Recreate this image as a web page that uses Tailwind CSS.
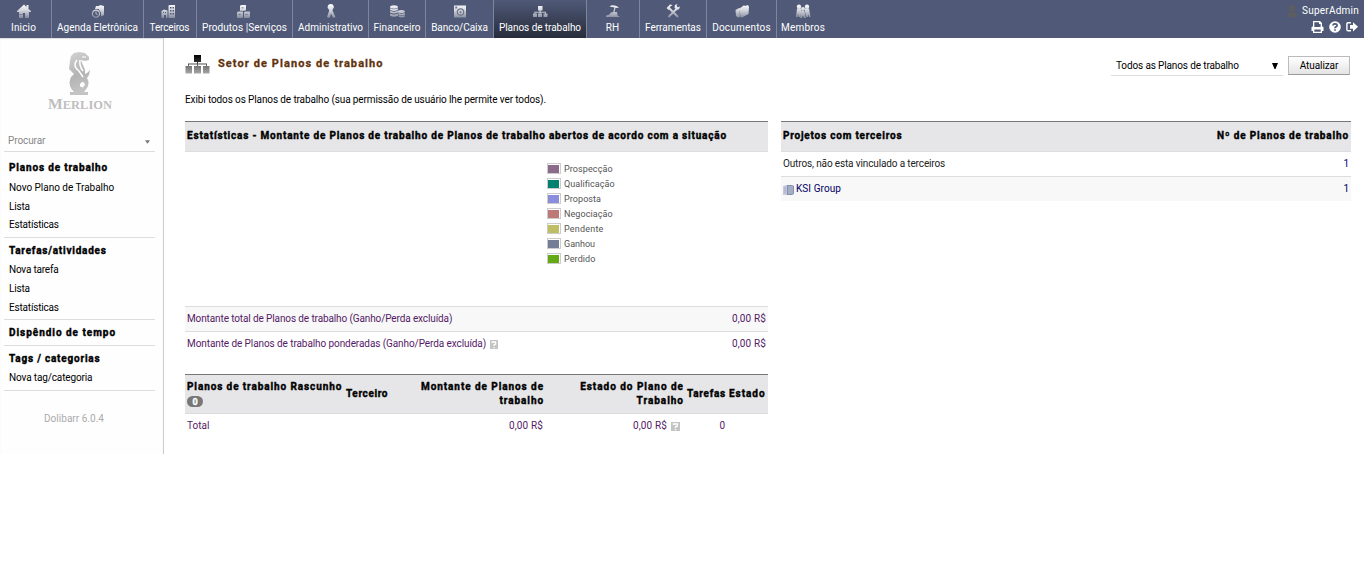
<!DOCTYPE html>
<html lang="pt-BR">
<head>
<meta charset="utf-8">
<title>Planos de trabalho</title>
<script src="https://cdn.jsdelivr.net/npm/@tailwindcss/browser@4"></script>
</head>
<body class="h-[580px] overflow-hidden bg-white font-[Roboto,sans-serif] text-[10px] leading-[14px] text-black">
<svg class="absolute h-0 w-0" aria-hidden="true"><defs>
<linearGradient id="g" gradientUnits="userSpaceOnUse" x1="0" y1="1" x2="0" y2="15"><stop offset="0" stop-color="#fff"/><stop offset=".45" stop-color="#d4d6dc"/><stop offset="1" stop-color="#858b9d"/></linearGradient>
<linearGradient id="k" gradientUnits="userSpaceOnUse" x1="0" y1="0" x2="0" y2="19"><stop offset="0" stop-color="#000"/><stop offset=".35" stop-color="#2c2c2c"/><stop offset=".6" stop-color="#777"/><stop offset="1" stop-color="#aaa"/></linearGradient>
<linearGradient id="m" x1="0" y1="0" x2=".2" y2="1"><stop offset="0" stop-color="#d2d2d2"/><stop offset=".6" stop-color="#b4b4b4"/><stop offset="1" stop-color="#c4c4c4"/></linearGradient>
</defs></svg>

<header class="flex h-[38px] justify-between bg-[#505a78] text-white">
<nav class="flex whitespace-nowrap [&>a]:flex [&>a]:h-full [&>a]:flex-col [&>a]:items-center [&>a]:border-r [&>a]:border-[#7d869d] [&>a]:pt-[3px] [&>a>svg]:size-4 [&>a>span]:mt-[2px]">
<a class="w-[52px] pr-1"><svg viewBox="0 0 16 16" fill="url(#g)"><path d="M1 8 8 1.500 10.500 4V2h2v4L15 8v1h-2v6H9v-5H7v1H3V9H1zM3 11.500h4V15H3z"/></svg><span class="tracking-[0.159px]">Inicio</span></a>
<a class="w-[92px]"><svg viewBox="0 0 16 16" fill="url(#g)"><path d="M6 3h3l1-1 4 1v9l-3 1.500V9.500L8.500 6H5z"/><path fill-rule="evenodd" d="M6 6.500a4.200 4.200 0 1 0 .1 0zm0 1.200a3 3 0 1 1-.1 0zM5.500 8.500h1v2l1.500 1-.6.800-1.900-1.300z"/></svg><span class="tracking-[0.009px]">Agenda Eletrônica</span></a>
<a class="w-[53px] pr-px"><svg viewBox="0 0 16 16" fill="url(#g)" class="-ml-1"><path fill-rule="evenodd" d="M8.500 2.500 10 2h5v13H8.500zM10 4v1.500h1.500V4zm2.500 0v1.500H14V4zM10 7v1.500h1.500V7zm2.500 0v1.500H14V7zM10 10v1.500h1.500V10zm2.500 0v1.500H14V10z"/><path fill-rule="evenodd" d="M1.500 8 4 6.500l3.500 1V15H6v-3H4v3H1.500zm1.500 1v1h1V9zm2 0v1h1V9z"/></svg><span class="tracking-[-0.16px]">Terceiros</span></a>
<a class="w-[96px]"><svg viewBox="0 0 16 16" fill="url(#g)" class="-ml-1"><path fill-rule="evenodd" d="M5 3l1-1h5v5l-1 .7H5zM6.500 4.500v.8h2v-.8zM2 9.500l1-1h5v5.500l-.500 1H2zM3.500 11v.8h2V11zM9 9.500l1-1h5v5.500l-1 1H9zm1.500 1.500v.8h2V11z"/></svg><span class="tracking-[0.082px]">Produtos |Serviços</span></a>
<a class="w-[76px]"><svg viewBox="0 0 16 16" fill="url(#g)"><path d="M8 1a3 3 0 0 1 1.800 5.300L9.500 7.500 12.500 14l-1.500 1-1.500-1L8 10.500 7 14.200 5.500 15 4 14l2.200-6.500-.5-1.200A3 3 0 0 1 8 1z"/></svg><span class="tracking-[0.031px]">Administrativo</span></a>
<a class="w-[57px]"><svg viewBox="0 0 16 16" fill="url(#g)"><ellipse cx="5" cy="4" rx="3.900" ry="1.700"/><path d="M1.100 5.200q3.900 2 7.800 0v1.800q-3.900 2-7.800 0zM1.100 7.800q3.900 2 7.800 0v1.800q-3.900 2-7.800 0zM1.100 10.400q3.900 2 7.800 0v2.400q-3.900 2-7.800 0z"/><ellipse cx="12.200" cy="8.500" rx="3.600" ry="1.500"/><path d="M9.500 10q3 1.500 6.300 0v1.700q-3 1.500-6.300 0zM9.500 12.200q3 1.500 6.300 0v1.500q-3 1.500-6.300 0z"/></svg><span class="tracking-[0.059px]">Financeiro</span></a>
<a class="w-[68px]"><svg viewBox="0 0 16 16"><path fill="url(#g)" d="M2 2.500h12v12H2z"/><circle cx="8.500" cy="9" r="3.200" fill="none" stroke="#6d748a" stroke-width="1.200"/><circle cx="8.500" cy="9" r="1" fill="#6d748a"/><path fill="#737a90" d="M3.200 3.500h2v2h-2z"/></svg><span class="tracking-[-0.03px]">Banco/Caixa</span></a>
<a class="w-[93px] bg-linear-to-b from-[#505a78] to-[#282d3c]"><svg viewBox="0 0 16 16" fill="url(#g)"><path d="M6 3h4.500v4.500H8.700v1.200h5.200V10.500H15.500V14h-4v-3.500h1.500v-.8H8.700v.8H10V14H6v-3.500h1.500v-.8H3.300v.8H5V14H1v-3.500h1.300V8.700h5.200V7.500H6z"/></svg><span class="tracking-[-0.06px]">Planos de trabalho</span></a>
<a class="w-[53px] pr-px"><svg viewBox="0 0 16 16" fill="url(#g)"><path d="M4.500 3.500Q7 1.500 9 2.500q3-.5 5 2.500l-3.500-.3L9.500 9H12l.5 3.500L15 14H1v-1.200l4-1.600.5-1.500L8.200 9l1.300-4.500z"/></svg><span class="tracking-[0.2px]">RH</span></a>
<a class="w-[67px]"><svg viewBox="0 0 16 16"><path fill="none" stroke="url(#g)" stroke-width="2" d="m4 5 9 9M12 5.500 3.500 14"/><path fill="url(#g)" d="M1.500 5 5 1.500 7.500 2 4.800 4 5 6 3.500 7zM9.500 4.500 10 2l2.500-1L11.500 3l1.300 1.300L15 3.500 14 6.200l-2.500.8z"/></svg><span class="tracking-[-0.04px]">Ferramentas</span></a>
<a class="w-[70px]"><svg viewBox="0 0 16 16" fill="url(#g)"><path d="m1.500 7 4-2.200.5 9.200-2 .5L2 13zM5.500 5.500 9 3l1-.8 1 .8L14 2l1 2-.5 7L8 14.500 6.500 14z"/></svg><span class="tracking-[0.2px]">Documentos</span></a>
<a class="w-[53px] border-r-transparent!"><svg viewBox="0 0 16 16" fill="url(#g)"><circle cx="4" cy="3.700" r="2.200"/><circle cx="12" cy="3.700" r="2.200"/><circle cx="8" cy="6" r="2"/><path d="M2 5.500h4l.5 3L5 14H3.500L3 10l-.5 4H1zM10 5.500h4l1.500 8.500H14l-.5-3-.5 3h-1.500l-1.500-5zM6.500 8h3l1.500 7H9l-1-2.500L7 15H5z"/></svg><span class="tracking-[0.203px]">Membros</span></a>
</nav>
<div class="flex flex-col items-end pr-[6px] pt-1">
<div class="flex items-center gap-[5px]"><svg class="h-3.5 w-[10px]" viewBox="0 0 11 14" fill="#5c5d60"><ellipse cx="5.500" cy="4.500" rx="3.500" ry="4"/><path d="M0 14V10.500Q2 9 4 8.500h3q2 .5 4 2V14z"/></svg><span class="-mr-px tracking-[0.234px]">SuperAdmin</span></div>
<div class="mt-[3px] flex gap-[5px]">
<svg class="h-3 w-[13px]" viewBox="0 0 13 12"><path fill="#fff" fill-rule="evenodd" d="M3 0h6l2 2v3.500h.7l.8.800V10H11v2H2v-2H.500V6.300l.8-.8H2V0zm.3 1.300V6h6.300V3H8V1.300zM3.300 8.500v2.200h6.400V8.500z"/></svg>
<svg class="size-3" viewBox="0 0 12 12"><circle cx="6" cy="6" r="5.800" fill="#fff"/><path fill="none" stroke="#505a78" stroke-width="1.700" d="M3.800 4.500q.2-1.700 2.200-1.700 2.100 0 2.100 1.600 0 1-1.200 1.500Q6 6.300 6 7.200M6 8.200v1.500"/></svg>
<svg class="h-3 w-3" viewBox="0 0 12 12"><path fill="none" stroke="#fff" stroke-width="1.400" d="M5 1.700H2Q.900 1.700.900 3v5.500q0 1.300 1.100 1.300h3"/><path fill="#fff" d="M4 4h3V1.200l5 4.600-5 4.600V7.800H4z"/></svg>
</div></div>
</header>

<div class="flex">
<aside class="h-[416px] w-[164px] shrink-0 border-r border-[#ccc] bg-[#fefefe] pl-1 shadow-[inset_0_1px_1px_#ddd]">
<div class="flex h-[92px] flex-col items-center pr-2 pt-[14px]">
<svg class="h-[43px] w-6" viewBox="0 0 24 43"><path fill="url(#m)" d="M3 4 6 1 11 0l6 1 4 4 0 3-4 1-4-1 2 5 2 5 0 4 2-1 3-3-1 5-2 3q3 5 0 10l-3 4h4v3H2v-3h4q-6-6-4-12 1-4 4-6L1 17 2 9z"/><path fill="none" stroke="#fff" stroke-width="1.500" d="M9 8q-5 6 2 11l4 6M12 8q-1 6 3 11"/><path fill="#fff" d="M14 4.500h4v1h-4zM12 32q2-3 4-1.500l1 2-2 3-3-1z"/></svg>
<svg class="mt-0 h-[16px] w-[66px]" viewBox="0 0 66 16"><text x="1" y="13.500" textLength="64" lengthAdjust="spacingAndGlyphs" font-family="Liberation Serif, serif" font-weight="bold" fill="#bebebe" font-size="12"><tspan font-size="15">M</tspan>ERLION</text></svg>
</div>
<div class="flex h-[22px] w-[151px] items-center justify-between border-b border-[#ddd] pl-1 pr-[5px] text-[#888]"><span class="tracking-[-0.1px]">Procurar</span><svg class="mt-[3px] h-1 w-[5px]" viewBox="0 0 6 4"><path fill="#777" d="M0 0h6L3 4z"/></svg></div>
<div class="w-[151px] [&>section]:border-b [&>section]:border-[#ddd] [&>section]:pl-[5px] [&_p]:h-[19px] [&_p]:leading-[19px]">
<section class="h-[86px] pt-[6px]"><p class="font-bold tracking-[0.837px] [-webkit-text-stroke:0.4px]">Planos de trabalho</p><p class="pt-px tracking-[-0.03px]">Novo Plano de Trabalho</p><p class="pt-px tracking-[-0.18px]">Lista</p><p class="tracking-[-0.19px]">Estatísticas</p></section>
<section class="h-[82px] pt-[3px]"><p class="font-bold tracking-[0.77px] [-webkit-text-stroke:0.4px]">Tarefas/atividades</p><p class="tracking-[-0.2px]">Nova tarefa</p><p class="tracking-[-0.18px]">Lista</p><p class="tracking-[-0.19px]">Estatísticas</p></section>
<section class="h-[26px] pt-[3px]"><p class="font-bold tracking-[0.969px] [-webkit-text-stroke:0.4px]">Dispêndio de tempo</p></section>
<section class="h-[45px] pt-[3px]"><p class="font-bold tracking-[0.8px] [-webkit-text-stroke:0.4px]">Tags / categorias</p><p class="tracking-[-0.13px]">Nova tag/categoria</p></section>
</div>
<div class="mt-[21px] pl-10 tracking-[0.03px] text-[#aaa]">Dolibarr 6.0.4</div>
</aside>

<main class="w-[1187px] pl-[21px]">
<div class="flex h-[55px] items-center justify-between pr-px">
<div class="-mt-[3px] flex items-center gap-2"><svg class="h-[19px] w-[25px]" viewBox="0 0 25 19"><path fill="url(#k)" d="M9 0h7v7h-3v1.500h9V11h2.500v7.500H18V11h3v-1.500h-8V11h3v7.500H9V11h3v-1.500H4V11h3v7.500H.500V11H3V8.500h9V7H9z"/></svg><h1 class="text-[11px] font-bold tracking-[1.08px] text-[#5f330c] [-webkit-text-stroke:0.3px]">Setor de Planos de trabalho</h1></div>
<div class="flex items-center gap-[5px]"><div class="flex h-[20px] w-[172px] items-center justify-between border-b border-[#ddd] pl-[5px] pr-[5px] pt-px"><span class="tracking-[-0.13px]">Todos as Planos de trabalho</span><svg class="h-[6px] w-[6px]" viewBox="0 0 6 6"><path d="M0 0h6L3.500 6h-1z"/></svg></div>
<button class="h-[19px] w-[62px] border border-[#bbb] border-b-[#999] bg-linear-to-b from-white to-[#e4e4e4] tracking-[-0.08px]">Atualizar</button></div>
</div>
<p class="tracking-[-0.116px]">Exibi todos os Planos de trabalho (sua permissão de usuário lhe permite ver todos).</p>

<div class="mt-[14px] flex gap-[13px]">
<div class="w-[583px]">
<div class="flex h-[31px] items-center border-b border-b-[#ddd] border-t border-t-[#777] bg-[#e6e6e8] pl-[2px] pb-px font-bold tracking-[0.81px] [-webkit-text-stroke:0.4px]">Estatísticas - Montante de Planos de trabalho de Planos de trabalho abertos de acordo com a situação</div>
<div class="h-[154px] pl-[362px] pt-[9px] text-[9px] text-[#545454] [&>div]:flex [&>div]:h-[15px] [&>div]:items-center [&>div]:gap-[3px] [&_i]:h-[11px] [&_i]:w-[14px] [&_i]:border [&_i]:border-[#ccc] [&_i]:pt-px [&_i]:pr-px [&_i]:bg-clip-content">
<div class="tracking-[0.1px]"><i class="bg-[#8c6a8c]"></i>Prospecção</div>
<div class="tracking-[0.05px]"><i class="bg-[#00826e]"></i>Qualificação</div>
<div class="tracking-[0.08px]"><i class="bg-[#8c8cdc]"></i>Proposta</div>
<div class="tracking-[0.08px]"><i class="bg-[#be7878]"></i>Negociação</div>
<div class="tracking-[0.2px]"><i class="bg-[#bebe64]"></i>Pendente</div>
<div><i class="bg-[#737d96]"></i>Ganhou</div>
<div class="tracking-[0.1px]"><i class="bg-[#64aa14]"></i>Perdido</div>
</div>
<div class="border-t border-[#ddd] text-[#551a66] [&>div]:flex [&>div]:items-center [&>div]:justify-between [&>div]:px-[2px]">
<div class="h-[25px] border-b border-[#ddd] bg-[#f8f8f8]"><span class="tracking-[-0.115px]">Montante total de Planos de trabalho (Ganho/Perda excluída)</span><span class="tracking-[0.129px]">0,00 R$</span></div>
<div class="h-[25px] pb-[2px]"><span class="flex items-center gap-1 tracking-[-0.087px]">Montante de Planos de trabalho ponderadas (Ganho/Perda excluída)<svg class="mt-[2px] h-[9px] w-2" viewBox="0 0 9 9" preserveAspectRatio="none"><rect width="9" height="9" fill="#c4c4c4"/><path fill="none" stroke="#fff" stroke-width="1.400" d="M2.500 3V2h3.800v2L4.500 5v1M4.500 7v1.200"/></svg></span><span class="tracking-[0.129px]">0,00 R$</span></div>
</div>
<div class="mt-[17px] grid h-[40px] grid-cols-[159px_42px_156px_140px_43px_1fr] items-center border-b border-b-[#ddd] border-t border-t-[#777] bg-[#e6e6e8] pl-[2px] font-bold [-webkit-text-stroke:0.4px]">
<div class="whitespace-nowrap"><div class="tracking-[0.9px]">Planos de trabalho Rascunho</div><div class="flex h-[14px] items-center pt-px"><span class="flex h-[11px] w-4 items-center justify-center rounded-full bg-[#777] text-[9px] text-white">0</span></div></div>
<div class="tracking-[0.62px]">Terceiro</div>
<div class="text-right tracking-[0.93px]">Montante de Planos de<br>trabalho</div>
<div class="text-right tracking-[0.98px]">Estado do Plano de<br>Trabalho</div>
<div class="pl-[3px] tracking-[0.734px]">Tarefas</div>
<div class="pl-[2px] tracking-[0.96px]">Estado</div>
</div>
<div class="grid h-6 grid-cols-[159px_42px_155px_137px_45px_1fr] items-center pl-[2px] text-[#551a66]"><span>Total</span><span></span><span class="text-right tracking-[0.129px]">0,00 R$</span><span class="flex items-center justify-end gap-1 tracking-[0.129px]">0,00 R$<svg class="mt-px size-[9px]" viewBox="0 0 9 9"><rect width="9" height="9" fill="#c4c4c4"/><path fill="none" stroke="#fff" stroke-width="1.400" d="M2.500 3V2h3.800v2L4.500 5v1M4.500 7v1.200"/></svg></span><span class="text-right">0</span></div>
</div>

<div class="w-[570px]">
<div class="flex h-[31px] items-center justify-between border-b border-b-[#ddd] border-t border-t-[#777] bg-[#e6e6e8] px-[2px] pb-px font-bold [-webkit-text-stroke:0.4px]"><span class="tracking-[0.79px]">Projetos com terceiros</span><span class="tracking-[0.851px]">Nº de Planos de trabalho</span></div>
<div class="flex h-[25px] items-center justify-between border-b border-[#ddd] px-[2px]"><span class="tracking-[-0.135px] text-[#222]">Outros, não esta vinculado a terceiros</span><span class="text-[#000078]">1</span></div>
<div class="flex h-[24px] items-center justify-between bg-[#f8f8f8] px-[2px] text-[#000064]"><span class="flex items-center gap-[2px] tracking-[0.071px]"><svg class="h-[11px] w-[11px]" viewBox="0 0 11 11"><path fill="#c3c9dc" d="M0 2 4 1v10H0z"/><path fill="#8490b0" d="M4 1h5l2 1v8l-2 1H4z"/><path stroke="#d5daea" stroke-width=".8" d="M5 3h5M5 5h5M5 7h5M5 9h5"/><path stroke="#99a4c0" stroke-width=".8" d="M1 4h2M1 6h2M1 8h2"/></svg>KSI Group</span><span>1</span></div>
</div>
</div>
</main>
</div>
</body>
</html>
